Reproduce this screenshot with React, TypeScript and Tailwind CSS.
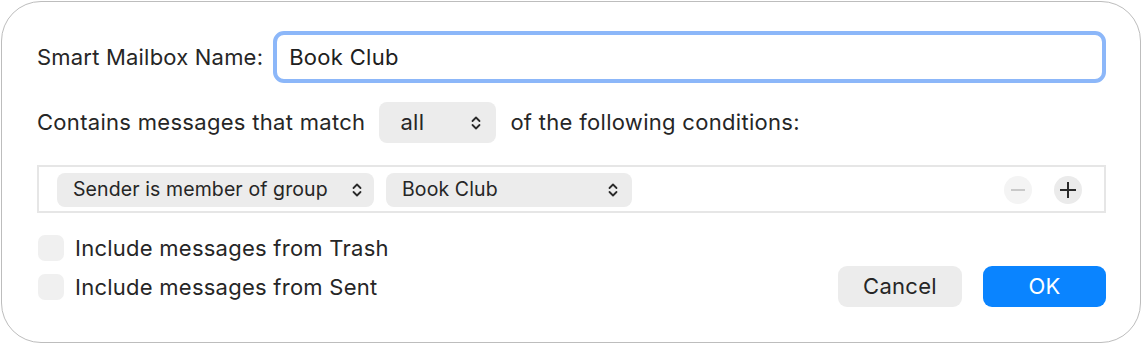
const font = { fontFamily: "Inter, 'Noto Sans', sans-serif" };

const Stepper = () => (
  <svg width="12" height="16" viewBox="0 0 12 16" fill="none" stroke="#2a2a2a" strokeWidth="1.8" strokeLinecap="round" strokeLinejoin="round">
    <path d="M2.5 6 L6 2.5 L9.5 6" />
    <path d="M2.5 10 L6 13.5 L9.5 10" />
  </svg>
);

const Select = ({ label, className }: { label: string; className: string }) => (
  <div className={`flex items-center justify-between rounded-[8px] bg-[#ececec] ${className}`}>
    <span>{label}</span>
    <Stepper />
  </div>
);

const Checkbox = ({ label }: { label: string }) => (
  <div className="flex items-center gap-[11px] h-[26px]">
    <span className="w-[26px] h-[26px] rounded-[7px] bg-[#f0f0f0]" />
    <span className="tracking-[0.25px]">{label}</span>
  </div>
);

export default function App() {
  return (
    <div className="w-[1146px] h-[346px] bg-white" style={font}>
      <div className="ml-[1px] mt-[1px] w-[1140px] h-[342px] rounded-[40px] border border-[#bdbdbd] bg-white pl-[34px] pr-[34px] pt-[29px] text-[22px] tracking-[0.3px] text-[#262626] flex flex-col">
        <div className="flex items-center h-[52px]">
          <span className="ml-[1px] tracking-[0.2px]">Smart Mailbox Name:</span>
          <div className="ml-[10px] flex-1 h-[52px] rounded-[11px] border-[4px] border-[#8cb7f9] flex items-center pl-[12px] text-[#202020]">
            Book Club
          </div>
        </div>

        <div className="flex items-center h-[41px] mt-[19px]">
          <span className="ml-[1px]">Contains messages that match</span>
          <Select label="all" className="ml-[14px] w-[117px] h-[41px] pl-[21px] pr-[14px]" />
          <span className="ml-[14px]">of the following conditions:</span>
        </div>

        <div className="mt-[22px] ml-[1px] h-[48px] border-2 border-[#e6e6e6] flex items-center pl-[18px] pr-[22px] text-[19.5px] tracking-[0.1px]">
          <Select label="Sender is member of group" className="w-[317px] h-[34px] pl-[16px] pr-[11px] mt-[1px]" />
          <Select label="Book Club" className="ml-[12px] w-[246px] h-[34px] pl-[16px] pr-[13px] mt-[1px]" />
          <div className="ml-auto flex items-center gap-[22px] mt-[1px]">
            <span className="w-[28px] h-[28px] rounded-full bg-[#f4f4f4] flex items-center justify-center">
              <span className="w-[14px] h-[2px] bg-[#c9c9c9]" />
            </span>
            <span className="w-[28px] h-[28px] rounded-full bg-[#ebebeb] flex items-center justify-center relative">
              <span className="w-[16px] h-[2px] bg-[#2a2a2a]" />
              <span className="absolute w-[2px] h-[16px] bg-[#2a2a2a]" />
            </span>
          </div>
        </div>

        <div className="flex items-start mt-[22px] ml-[2px]">
          <div className="flex flex-col gap-[13px]">
            <Checkbox label="Include messages from Trash" />
            <Checkbox label="Include messages from Sent" />
          </div>
          <div className="ml-auto mt-[31px] flex gap-[21px]">
            <button className="w-[124px] h-[41px] rounded-[9px] bg-[#ececec] text-[#262626]">Cancel</button>
            <button className="w-[123px] h-[41px] rounded-[9px] bg-[#0a84ff] text-white">OK</button>
          </div>
        </div>
      </div>
    </div>
  );
}
